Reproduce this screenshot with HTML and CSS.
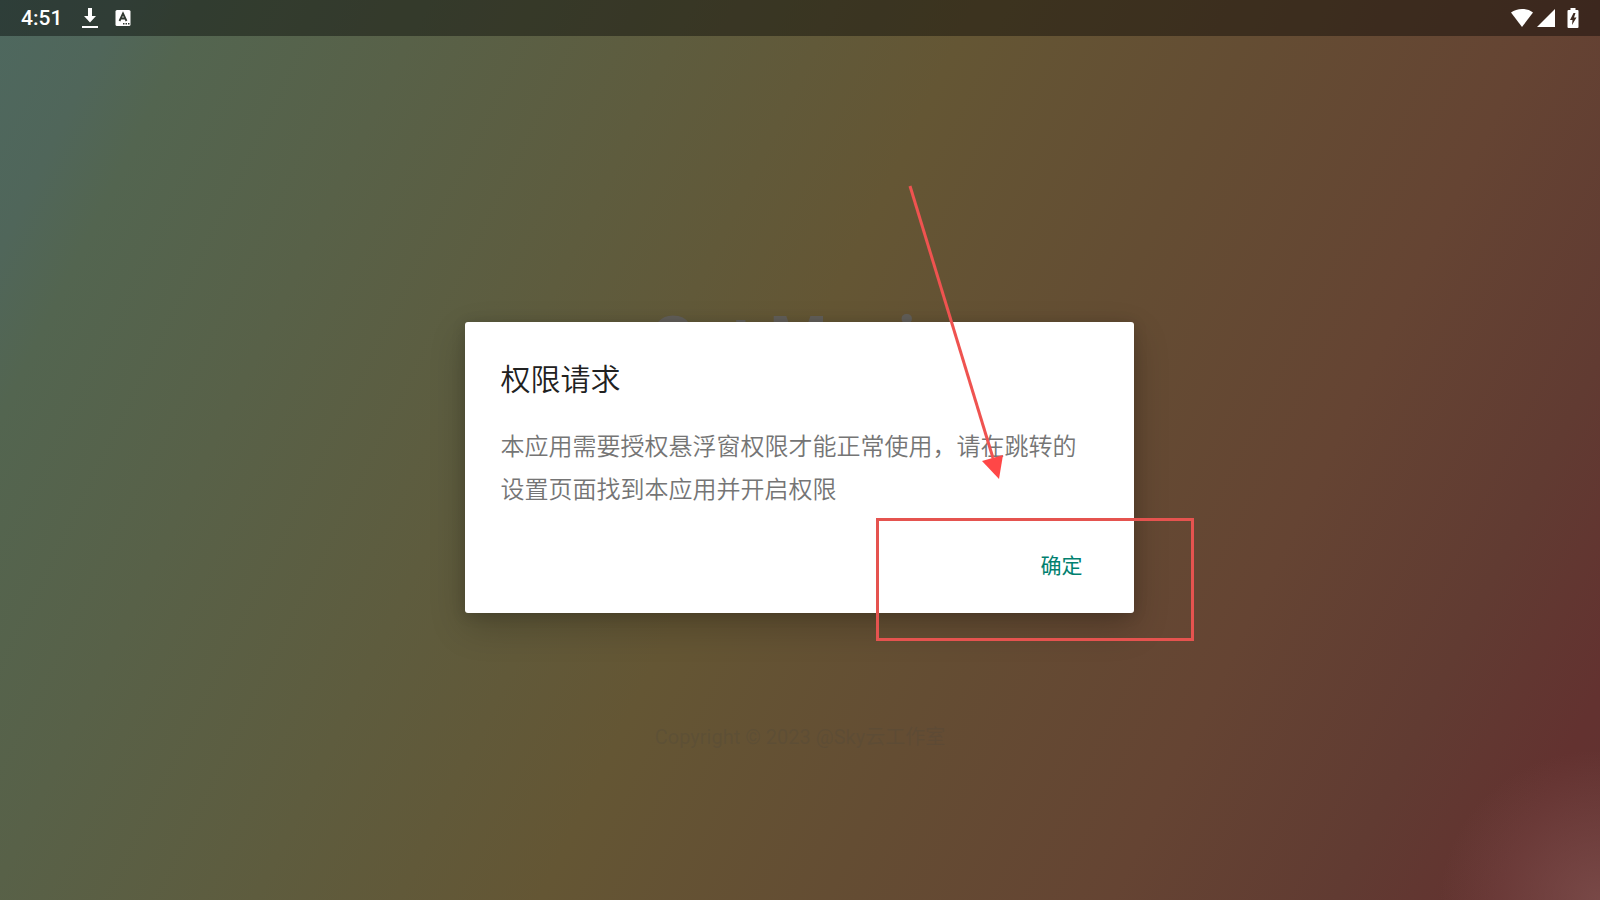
FILE: index.html
```
<!DOCTYPE html>
<html lang="zh-CN">
<head>
  <meta charset="utf-8">
  <title>权限请求</title>
  <link rel="stylesheet" href="styles.css">
</head>
<body>
  <header class="status-bar">
    <span class="clock">4:51</span>
    <svg class="icon-download" width="16" height="22" viewBox="0 0 16 22">
      <path d="M6 1h4v8h4l-6 6.500-6-6.500h4z" fill="#fff"/>
      <path d="M0 19h16v2H0z" fill="#fff"/>
    </svg>
    <svg class="icon-app" width="16" height="18" viewBox="0 0 16 18">
      <rect x="0.500" y="1" width="15" height="16" rx="1.500" fill="#fff"/>
      <path d="M4.500 12 8 4.500 11.500 12M5.800 9.500h4.500" fill="none" stroke="#303930" stroke-width="1.800"/>
      <path d="M8 14h1.500v1.500H8zM10.500 14H12v1.500h-1.500zM13 14h1.500v1.500H13z" fill="#303930"/>
    </svg>
    <div class="status-right">
      <svg width="24" height="20" viewBox="0 0 24 20">
        <path d="M1 4.500C7-.300 17-.300 23 4.500L12 19z" fill="#fff"/>
      </svg>
      <svg width="20" height="20" viewBox="0 0 20 20">
        <path d="M19 1v18H1z" fill="#fff"/>
      </svg>
      <svg class="icon-battery" width="12" height="20" viewBox="0 0 12 20">
        <path d="M3.500 0h5v2H10.500q1 0 1 1v16q0 1-1 1h-9q-1 0-1-1V3q0-1 1-1h2z" fill="#fff"/>
        <path d="M6.500 5 3 12h2.500L5 17l4.500-7.500H7L8.500 5z" fill="#3d2a20"/>
      </svg>
    </div>
  </header>

  <main class="screen">
    <h1 class="app-name">Get Music</h1>
    <p class="copyright">Copyright © 2023 @Sky云工作室</p>
  </main>

  <div class="overlay">
    <section class="dialog" role="dialog" aria-labelledby="dialog-title">
      <h2 class="dialog-title" id="dialog-title">权限请求</h2>
      <p class="dialog-text">本应用需要授权悬浮窗权限才能正常使用，请在跳转的设置页面找到本应用并开启权限</p>
      <div class="dialog-actions">
        <button type="button" class="btn-ok">确定</button>
      </div>
      <!-- arrow and frame pointing at the confirm button -->
      <svg class="arrow" width="100" height="300" viewBox="0 0 100 300">
        <path d="M5 6 88 278" stroke="#ef5350" stroke-width="3"/>
        <path d="M77 281 98 275 94 299z" fill="#ff4747"/>
      </svg>
      <div class="frame"></div>
    </section>
  </div>
</body>
</html>
```

FILE: styles.css
```
* {
  box-sizing: border-box;
}

body {
  margin: 0;
  min-height: 100vh;
  overflow: hidden;
  font-family: Roboto, "Noto Sans CJK SC", sans-serif;
  background:
    radial-gradient(ellipse 160px 150px at 100% 100%, rgba(128, 80, 78, 0.75), rgba(128, 80, 78, 0)),
    linear-gradient(116deg, #4e685f 0%, #50665a 6%, #536550 10%, #586148 21%, #5e5c3e 34%, #645634 48%, #644d33 62%, #654433 76%, #613b32 87%, #633230 95%, #623231 100%);
}

.status-bar {
  display: flex;
  align-items: center;
  height: 36px;
  padding: 0 21px;
  background: rgba(0, 0, 0, 0.4);
  color: #fff;
}

.clock {
  font-size: 21px;
  font-weight: 500;
}

.icon-download {
  margin-left: 20px;
}

.icon-app {
  margin-left: 17px;
}

.status-right {
  display: flex;
  gap: 2px;
  margin-left: auto;
}

.icon-battery {
  margin-left: 9px;
}

.screen {
  display: flex;
  flex-direction: column;
  align-items: center;
  padding-top: 268px;
}

.app-name {
  margin: 0;
  font-size: 66px;
  font-weight: 700;
  line-height: 76px;
  color: #625f5a;
}

.copyright {
  margin: 342px 0 0;
  font-size: 20px;
  line-height: 30px;
  color: rgba(74, 70, 60, 0.25);
}

/* the dialog is centred below the status bar */
.overlay {
  position: absolute;
  inset: 0;
  display: flex;
  align-items: center;
  justify-content: center;
  padding: 34px 2px 0 0;
}

.dialog {
  position: relative;
  width: 669px;
  padding: 36px 36px 22px;
  border-radius: 3px;
  background: #fff;
  box-shadow: 0 14px 36px rgba(0, 0, 0, 0.2), 0 2px 14px rgba(0, 0, 0, 0.15);
}

.dialog-title {
  margin: 0;
  font-size: 30px;
  font-weight: 350;
  line-height: 44px;
  color: #212121;
}

.dialog-text {
  margin: 24px 0 0;
  font-size: 24px;
  font-weight: 350;
  line-height: 43px;
  color: #757575;
}

.dialog-actions {
  display: flex;
  justify-content: flex-end;
  margin-top: 25px;
}

.btn-ok {
  height: 54px;
  padding: 0 15px;
  border: none;
  background: none;
  font-family: inherit;
  font-size: 21px;
  color: #00806f;
  cursor: pointer;
}

.arrow {
  position: absolute;
  left: 440px;
  top: -142px;
  pointer-events: none;
}

.frame {
  position: absolute;
  right: -60px;
  bottom: -28px;
  width: 318px;
  height: 123px;
  border: 3px solid #e5534f;
  pointer-events: none;
}
```
